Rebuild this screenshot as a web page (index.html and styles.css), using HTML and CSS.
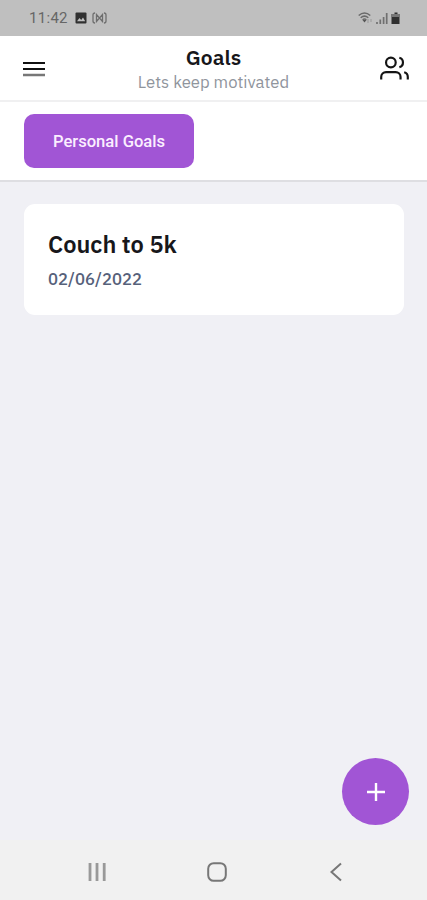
FILE: index.html
```html
<!DOCTYPE html>
<html lang="en">
<head>
    <meta charset="UTF-8">
    <meta name="viewport" content="width=device-width, initial-scale=1">
    <title>Goals</title>
    <link rel="stylesheet" href="styles.css">
</head>
<body>
<div class="phone">
    <div class="status">
        <span class="time">11:42</span>
        <svg class="photo" width="12" height="12" viewBox="0 0 12 12">
            <rect x="0.5" y="0.5" width="11" height="11" rx="1" fill="#303030"/>
            <path d="M2 9.2 4.5 6l1.7 1.9L8 5.6l2.2 3.6z" fill="#bfbfbf"/>
        </svg>
        <svg class="cast" width="15" height="12" viewBox="0 0 15 12" fill="none" stroke="#6e6e6e" stroke-width="1.3">
            <path d="M3 1Q1 1 1 3v6q0 2 2 2M12 1q2 0 2 2v6q0 2-2 2M4.500 2.500v7L7.500 6zM10.500 2.500v7L7.500 6z"/>
        </svg>
        <svg class="signal" width="43" height="14" viewBox="0 0 43 14">
            <g fill="none" stroke="#6a6a6a" stroke-width="1.5">
                <path d="M.7 4.500Q6.500-.5 12.300 4.500M2.700 6.700q3.800-3.200 7.600 0M4.600 8.800q1.900-1.600 3.800 0"/>
            </g>
            <path d="m6.500 11.500-2-2.400h4z" fill="#555"/>
            <path d="M10 8v4M13 8v3" stroke="#999" stroke-width="1"/>
            <path d="M19 11v2M22.300 8.500V13M25.600 6v7M28.700 2v11" stroke="#707070" stroke-width="1.700"/>
            <path d="M36.500 1.500h3v1.500h2v10h-8V3h3z" fill="#303030"/>
            <path d="M33.500 3h8v3h-8z" fill="#777"/>
        </svg>
    </div>

    <div class="header">
        <svg class="menu" width="22" height="16" viewBox="0 0 22 16">
            <path d="M0 2h22M0 8h22" stroke="#111" stroke-width="2"/>
            <path d="M0 14h22" stroke="#777" stroke-width="2.500"/>
        </svg>
        <div class="heading">
            <h1>Goals</h1>
            <p>Lets keep motivated</p>
        </div>
        <svg class="users" width="29" height="29" viewBox="0 0 24 24" fill="none" stroke="#151515" stroke-width="1.800">
            <path d="M17 21v-2a4 4 0 0 0-4-4H5a4 4 0 0 0-4 4v2"/>
            <circle cx="9" cy="7" r="4"/>
            <path d="M23 21v-2a4 4 0 0 0-3-3.870M16 3.130a4 4 0 0 1 0 7.750"/>
        </svg>
    </div>

    <div class="tabs">
        <button class="tab">Personal Goals</button>
    </div>

    <div class="content">
        <div class="card">
            <h2>Couch to 5k</h2>
            <p class="date">02/06/2022</p>
        </div>
        <button class="add" aria-label="Add goal">
            <svg width="18" height="18" viewBox="0 0 18 18" stroke="#fff" stroke-width="2.400">
                <path d="M9 0v18M0 9h18"/>
            </svg>
        </button>
    </div>

    <div class="navbar">
        <svg width="20" height="20" viewBox="0 0 20 20" stroke="#999" stroke-width="2.800">
            <path d="M3 1v18M10 1v18M17.200 1v18"/>
        </svg>
        <svg width="20" height="20" viewBox="0 0 20 20" fill="none" stroke="#777" stroke-width="2">
            <rect x="1.200" y="1.200" width="17.600" height="17.600" rx="5.500"/>
        </svg>
        <svg width="20" height="20" viewBox="0 0 20 20" fill="none" stroke="#777" stroke-width="2">
            <path d="M15 1.500 5.500 10l9.500 8.500"/>
        </svg>
    </div>
</div>
</body>
</html>
```

FILE: styles.css
```css
* {
    box-sizing: border-box;
}

body, h1, h2, p {
    margin: 0;
}

body {
    font-family: "IBM Plex Sans", "Noto Sans", sans-serif;
    background: #f0f0f5;
}

button {
    border: 0;
    padding: 0;
}

svg {
    display: block;
    flex: none;
}

.phone {
    display: flex;
    flex-direction: column;
    height: 900px;
    overflow: hidden;
}

.status {
    display: flex;
    align-items: center;
    height: 36px;
    padding: 0 26px 0 29px;
    background: #bfbfbf;
}

.time {
    width: 46px;
    font: 15px/36px Roboto, sans-serif;
    letter-spacing: .3px;
    color: #666;
}

.cast {
    margin-left: 5px;
}

.signal {
    margin-left: auto;
}

.header {
    display: flex;
    align-items: center;
    justify-content: space-between;
    height: 66px;
    padding: 2px 18px 0 23px;
    background: #fff;
    border-bottom: 2px solid #f0f0f1;
}

.heading {
    margin-left: 2px;
    text-align: center;
}

.heading h1 {
    font-size: 21px;
    line-height: 26px;
    font-weight: 600;
    letter-spacing: .1px;
    color: #17171b;
}

.heading p {
    font-size: 16.7px;
    line-height: 24px;
    color: #90959d;
}

.users {
    margin-bottom: 1px;
}

.tabs {
    height: 80px;
    padding: 12px 24px;
    background: #fff;
    border-bottom: 2px solid #dedee2;
}

.tab {
    width: 170px;
    height: 54px;
    border-radius: 10px;
    background: #a155d5;
    font: 500 16.6px Roboto, sans-serif;
    color: #fbeeff;
}

.content {
    position: relative;
    flex: 1;
    padding: 22px 23px 0 24px;
}

.card {
    height: 111px;
    padding: 25px 24px;
    border-radius: 11px;
    background: #fff;
}

.card h2 {
    font-size: 23.6px;
    line-height: 30px;
    font-weight: 600;
    color: #17171b;
}

.date {
    margin-top: 8px;
    font-size: 16.7px;
    line-height: 24px;
    font-weight: 500;
    color: #56617a;
}

/* floating action button */
.add {
    position: absolute;
    right: 18px;
    bottom: 15px;
    display: flex;
    align-items: center;
    justify-content: center;
    width: 67px;
    height: 67px;
    border-radius: 50%;
    background: #a155d5;
}

.navbar {
    display: flex;
    align-items: center;
    justify-content: space-between;
    height: 60px;
    padding: 4px 81px 0 87px;
    background: #f1f1f1;
}
```
